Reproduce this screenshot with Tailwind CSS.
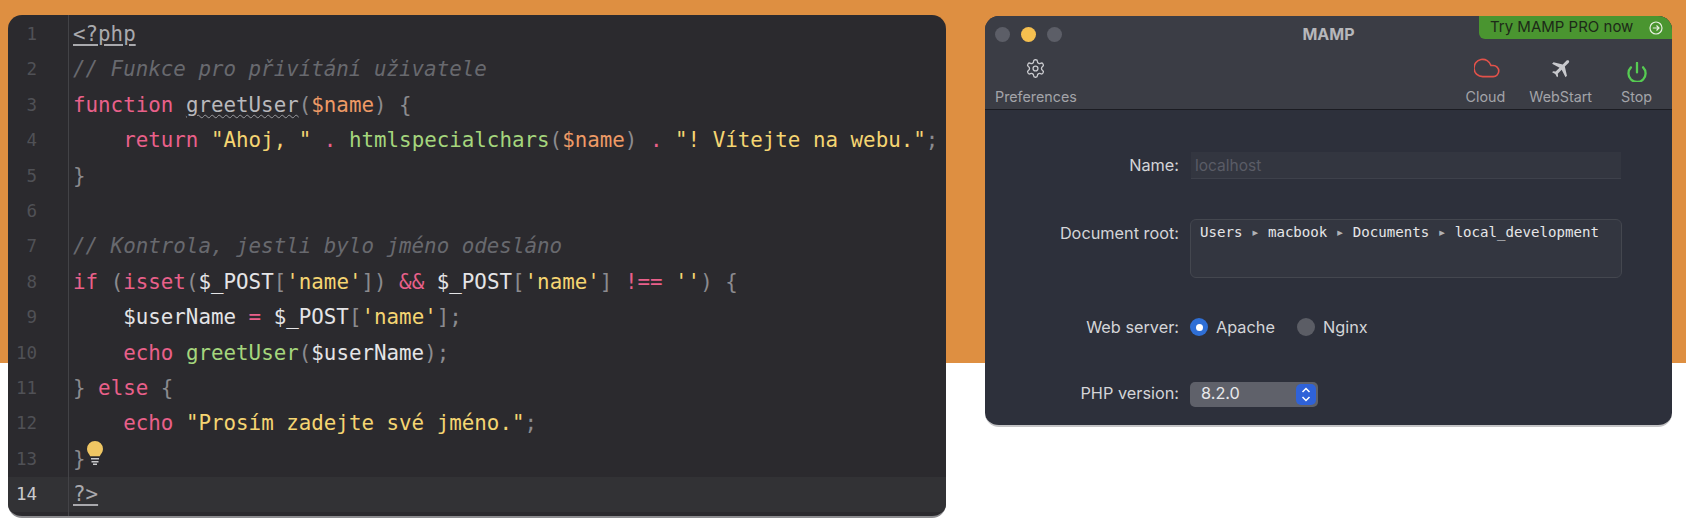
<!DOCTYPE html>
<html lang="en">
<head>
  <meta charset="UTF-8" />
  <title>PHP and MAMP</title>
  <script src="https://cdn.jsdelivr.net/npm/@tailwindcss/browser@4"></script>
</head>
<body class="h-[530px] overflow-hidden bg-[linear-gradient(#de8f41_363px,#ffffff_363px)]">
  <div class="flex items-start pl-2 pt-[15px]">

    <!-- editor -->
    <div class="flex h-[503px] w-[938px] flex-col overflow-hidden rounded-[14px] border-b-2 border-[#8d8d90] bg-[#2b2a2e] font-['DejaVu_Sans_Mono',monospace] text-[20.84px] text-[#8b8b8f]">
      <div class="h-[2px] w-[61px] shrink-0 border-r border-[#434347]"></div>
      <div class="flex h-[35.4px] items-center"><span class="w-[61px] shrink-0 border-r border-[#434347] pr-[31px] text-right text-[17.5px] leading-[35.4px] text-[#505156]">1</span><code class="whitespace-pre pl-1 font-['DejaVu_Sans_Mono',monospace] text-[#a9a9ad] underline underline-offset-3">&lt;?php</code></div>
      <div class="flex h-[35.4px] items-center"><span class="w-[61px] shrink-0 border-r border-[#434347] pr-[31px] text-right text-[17.5px] leading-[35.4px] text-[#505156]">2</span><code class="whitespace-pre pl-1 font-['DejaVu_Sans_Mono',monospace] italic text-[#68696e]">// Funkce pro přivítání uživatele</code></div>
      <div class="flex h-[35.4px] items-center"><span class="w-[61px] shrink-0 border-r border-[#434347] pr-[31px] text-right text-[17.5px] leading-[35.4px] text-[#505156]">3</span><code class="whitespace-pre pl-1 font-['DejaVu_Sans_Mono',monospace]"><span class="text-[#e9608a]">function</span> <span class="text-[#b9b9bc] underline decoration-wavy decoration-1 decoration-[#9a9a9e] underline-offset-2">greetUser</span>(<span class="text-[#ee9a66]">$name</span>) {</code></div>
      <div class="flex h-[35.4px] items-center"><span class="w-[61px] shrink-0 border-r border-[#434347] pr-[31px] text-right text-[17.5px] leading-[35.4px] text-[#505156]">4</span><code class="whitespace-pre pl-1 font-['DejaVu_Sans_Mono',monospace]">    <span class="text-[#e9608a]">return</span> <span class="text-[#f5d572]">"Ahoj, "</span> <span class="text-[#e9608a]">.</span> <span class="text-[#a5d67d]">htmlspecialchars</span>(<span class="text-[#ee9a66]">$name</span>) <span class="text-[#e9608a]">.</span> <span class="text-[#f5d572]">"! Vítejte na webu."</span>;</code></div>
      <div class="flex h-[35.4px] items-center"><span class="w-[61px] shrink-0 border-r border-[#434347] pr-[31px] text-right text-[17.5px] leading-[35.4px] text-[#505156]">5</span><code class="whitespace-pre pl-1 font-['DejaVu_Sans_Mono',monospace]">}</code></div>
      <div class="flex h-[35.4px] items-center"><span class="w-[61px] shrink-0 border-r border-[#434347] pr-[31px] text-right text-[17.5px] leading-[35.4px] text-[#505156]">6</span></div>
      <div class="flex h-[35.4px] items-center"><span class="w-[61px] shrink-0 border-r border-[#434347] pr-[31px] text-right text-[17.5px] leading-[35.4px] text-[#505156]">7</span><code class="whitespace-pre pl-1 font-['DejaVu_Sans_Mono',monospace] italic text-[#68696e]">// Kontrola, jestli bylo jméno odesláno</code></div>
      <div class="flex h-[35.4px] items-center"><span class="w-[61px] shrink-0 border-r border-[#434347] pr-[31px] text-right text-[17.5px] leading-[35.4px] text-[#505156]">8</span><code class="whitespace-pre pl-1 font-['DejaVu_Sans_Mono',monospace]"><span class="text-[#e9608a]">if</span> (<span class="text-[#e9608a]">isset</span>(<span class="text-[#e4e4e6]">$_POST</span>[<span class="text-[#f5d572]">'name'</span>]) <span class="text-[#e9608a]">&amp;&amp;</span> <span class="text-[#e4e4e6]">$_POST</span>[<span class="text-[#f5d572]">'name'</span>] <span class="text-[#e9608a]">!==</span> <span class="text-[#f5d572]">''</span>) {</code></div>
      <div class="flex h-[35.4px] items-center"><span class="w-[61px] shrink-0 border-r border-[#434347] pr-[31px] text-right text-[17.5px] leading-[35.4px] text-[#505156]">9</span><code class="whitespace-pre pl-1 font-['DejaVu_Sans_Mono',monospace]">    <span class="text-[#e4e4e6]">$userName</span> <span class="text-[#e9608a]">=</span> <span class="text-[#e4e4e6]">$_POST</span>[<span class="text-[#f5d572]">'name'</span>];</code></div>
      <div class="flex h-[35.4px] items-center"><span class="w-[61px] shrink-0 border-r border-[#434347] pr-[31px] text-right text-[17.5px] leading-[35.4px] text-[#505156]">10</span><code class="whitespace-pre pl-1 font-['DejaVu_Sans_Mono',monospace]">    <span class="text-[#e9608a]">echo</span> <span class="text-[#a5d67d]">greetUser</span>(<span class="text-[#e4e4e6]">$userName</span>);</code></div>
      <div class="flex h-[35.4px] items-center"><span class="w-[61px] shrink-0 border-r border-[#434347] pr-[31px] text-right text-[17.5px] leading-[35.4px] text-[#505156]">11</span><code class="whitespace-pre pl-1 font-['DejaVu_Sans_Mono',monospace]">} <span class="text-[#e9608a]">else</span> {</code></div>
      <div class="flex h-[35.4px] items-center"><span class="w-[61px] shrink-0 border-r border-[#434347] pr-[31px] text-right text-[17.5px] leading-[35.4px] text-[#505156]">12</span><code class="whitespace-pre pl-1 font-['DejaVu_Sans_Mono',monospace]">    <span class="text-[#e9608a]">echo</span> <span class="text-[#f5d572]">"Prosím zadejte své jméno."</span>;</code></div>
      <div class="flex h-[35.4px] items-center"><span class="w-[61px] shrink-0 border-r border-[#434347] pr-[31px] text-right text-[17.5px] leading-[35.4px] text-[#505156]">13</span><code class="whitespace-pre pl-1 font-['DejaVu_Sans_Mono',monospace]">}</code>
        <svg class="ml-[1.5px] -mt-[12px]" width="16" height="24" viewBox="0 0 16 24"><path d="M8 0a8 8 0 0 0-8 8c0 3.2 2.2 5 3.2 7.2h9.6C13.800 13 16 11.200 16 8a8 8 0 0 0-8-8z" fill="#efc663"/><path d="M4 17h8v1.600H4zM4.500 20h7v1.500h-7zM6 22.500h4V24H6z" fill="#c9c9cc"/></svg>
      </div>
      <div class="flex h-[35.4px] items-center bg-[#323235]"><span class="w-[61px] shrink-0 border-r border-[#434347] pr-[31px] text-right text-[17.5px] leading-[35.4px] text-[#c9c9cc]">14</span><code class="whitespace-pre pl-1 font-['DejaVu_Sans_Mono',monospace] text-[#a9a9ad] underline underline-offset-3">?&gt;</code></div>
      <div class="w-[61px] grow border-r border-[#434347]"></div>
    </div>

    <!-- MAMP window -->
    <div class="relative ml-[39px] mt-px flex h-[411px] w-[687px] flex-col overflow-hidden rounded-[14px] border-b-2 border-[#c4c4c6] bg-[#2d303b] font-['Inter',sans-serif] text-[16.3px] text-[#d4d5d8]">
      <div class="absolute right-0 top-0 flex h-[23px] w-[193px] items-center justify-between rounded-bl-[6px] bg-[#4a9530] pl-[11px] pr-[9px] text-[15px] text-[#1d2a18]">
        <span>Try MAMP PRO now</span>
        <svg width="14" height="14" viewBox="0 0 14 14" fill="none" stroke="#e8f0e2" stroke-width="1.200"><circle cx="7" cy="7" r="6"/><path d="M3.800 7h6.200M7.500 4.500 10 7l-2.500 2.500"/></svg>
      </div>

      <div class="flex h-[94px] shrink-0 flex-col border-b border-[#1b1c22] bg-[#3b3d45]">
        <div class="relative flex h-[34px] shrink-0 items-center gap-[11px] pl-[10px] pt-[3px]">
          <span class="h-[15px] w-[15px] rounded-full bg-[#5c5e67]"></span>
          <span class="h-[15px] w-[15px] rounded-full bg-[#f5bf4f]"></span>
          <span class="h-[15px] w-[15px] rounded-full bg-[#5c5e67]"></span>
          <span class="absolute left-0 right-0 top-[6px] text-center text-[16px] font-bold text-[#b6b7bb]">MAMP</span>
        </div>
        <div class="flex justify-between pl-[10px] pr-5 text-[14.300px] text-[#a3a4a9]">
          <div class="flex flex-col items-center">
            <div class="flex h-9 items-center">
              <svg width="21" height="21" viewBox="0 0 24 24" fill="none" stroke="#c8c9cd" stroke-width="1.500"><path d="M12.220 2h-.44a2 2 0 0 0-2 2v.18a2 2 0 0 1-1 1.730l-.43.25a2 2 0 0 1-2 0l-.15-.08a2 2 0 0 0-2.730.73l-.22.38a2 2 0 0 0 .73 2.730l.15.1a2 2 0 0 1 1 1.720v.51a2 2 0 0 1-1 1.740l-.15.09a2 2 0 0 0-.73 2.730l.22.38a2 2 0 0 0 2.730.73l.15-.08a2 2 0 0 1 2 0l.43.25a2 2 0 0 1 1 1.730V20a2 2 0 0 0 2 2h.44a2 2 0 0 0 2-2v-.18a2 2 0 0 1 1-1.730l.43-.25a2 2 0 0 1 2 0l.15.08a2 2 0 0 0 2.730-.73l.22-.39a2 2 0 0 0-.73-2.730l-.15-.08a2 2 0 0 1-1-1.740v-.5a2 2 0 0 1 1-1.740l.15-.09a2 2 0 0 0 .73-2.730l-.22-.38a2 2 0 0 0-2.730-.73l-.15.08a2 2 0 0 1-2 0l-.43-.25a2 2 0 0 1-1-1.730V4a2 2 0 0 0-2-2z"/><circle cx="12" cy="12" r="2.800"/></svg>
            </div>
            <span>Preferences</span>
          </div>
          <div class="flex">
            <div class="flex flex-col items-center">
              <div class="flex h-9 items-center pl-[3px]">
                <svg width="26" height="20" viewBox="2 4 21 16" fill="none" stroke="#e2524a" stroke-width="1.300"><path d="M17.500 19H9a7 7 0 1 1 6.710-9h1.790a4.500 4.500 0 1 1 0 9Z"/></svg>
              </div>
              <span>Cloud</span>
            </div>
            <div class="ml-6 flex flex-col items-center">
              <div class="flex h-9 items-center pl-[3px]">
                <svg class="rotate-45" width="24" height="24" viewBox="0 0 24 24" fill="#c8c9cd"><path d="M21 16v-2l-8-5V3.500c0-.83-.67-1.500-1.500-1.500S10 2.670 10 3.500V9l-8 5v2l8-2.500V19l-2 1.500V22l3.500-1 3.500 1v-1.500L13 19v-5.500l8 2.500z"/></svg>
              </div>
              <span>WebStart</span>
            </div>
            <div class="ml-[29px] flex flex-col items-center">
              <div class="flex h-9 items-center pl-[2px] pt-[7px]">
                <svg width="20" height="20" viewBox="2 1 20 21" fill="none" stroke="#56cc52" stroke-width="2.400" stroke-linecap="round"><path d="M12 2v10"/><path d="M18.400 6.600a9 9 0 1 1-12.770.04"/></svg>
              </div>
              <span>Stop</span>
            </div>
          </div>
        </div>
      </div>

      <form class="flex flex-col pt-[42px]">
        <div class="flex items-center">
          <span class="w-[194px] text-right">Name:</span>
          <div class="ml-3 flex h-[27px] w-[430px] items-center border-b border-[#3e414b] bg-[#333640] px-1 pt-0.5 text-[15.500px] text-[#5a5c66]">localhost</div>
        </div>
        <div class="mt-10 flex items-start">
          <span class="w-[194px] pt-[2px] text-right">Document root:</span>
          <div class="ml-[11px] h-[59px] w-[432px] rounded-[6px] border border-[#44474f] bg-[#333640] pl-[9px] pt-[2px] font-['DejaVu_Sans_Mono',monospace] text-[14.100px] leading-5 text-[#e6e6e8]">Users <span class="text-[#b0b1b5]">▸</span> macbook <span class="text-[#b0b1b5]">▸</span> Documents <span class="text-[#b0b1b5]">▸</span> local_development</div>
        </div>
        <div class="mt-[39px] flex h-5 items-center">
          <span class="w-[194px] text-right">Web server:</span>
          <span class="ml-[11px] flex h-[18px] w-[18px] items-center justify-center rounded-full bg-[#2f6fd6]"><span class="h-[7px] w-[7px] rounded-full bg-white"></span></span>
          <span class="ml-2">Apache</span>
          <span class="ml-[22px] h-[18px] w-[18px] rounded-full bg-[#5b5d65]"></span>
          <span class="ml-2">Nginx</span>
        </div>
        <div class="mt-[45px] flex h-[25px] items-center">
          <span class="w-[194px] pb-0.5 text-right">PHP version:</span>
          <div class="ml-[11px] flex h-[25px] w-[128px] items-center justify-between rounded-[5px] bg-[#5f616a] pl-[11px] pr-[2px] text-[#e8e8ea]">
            <span class="pb-0.5">8.2.0</span>
            <span class="flex h-[21px] w-[20px] items-center justify-center rounded-[5px] bg-[#2f62d8]">
              <svg width="10" height="17" viewBox="0 0 10 17" fill="none" stroke="#ffffff" stroke-width="1.500"><path d="M1.500 6 5 2.500 8.500 6M1.500 11 5 14.500 8.500 11"/></svg>
            </span>
          </div>
        </div>
      </form>
    </div>
  </div>
</body>
</html>
